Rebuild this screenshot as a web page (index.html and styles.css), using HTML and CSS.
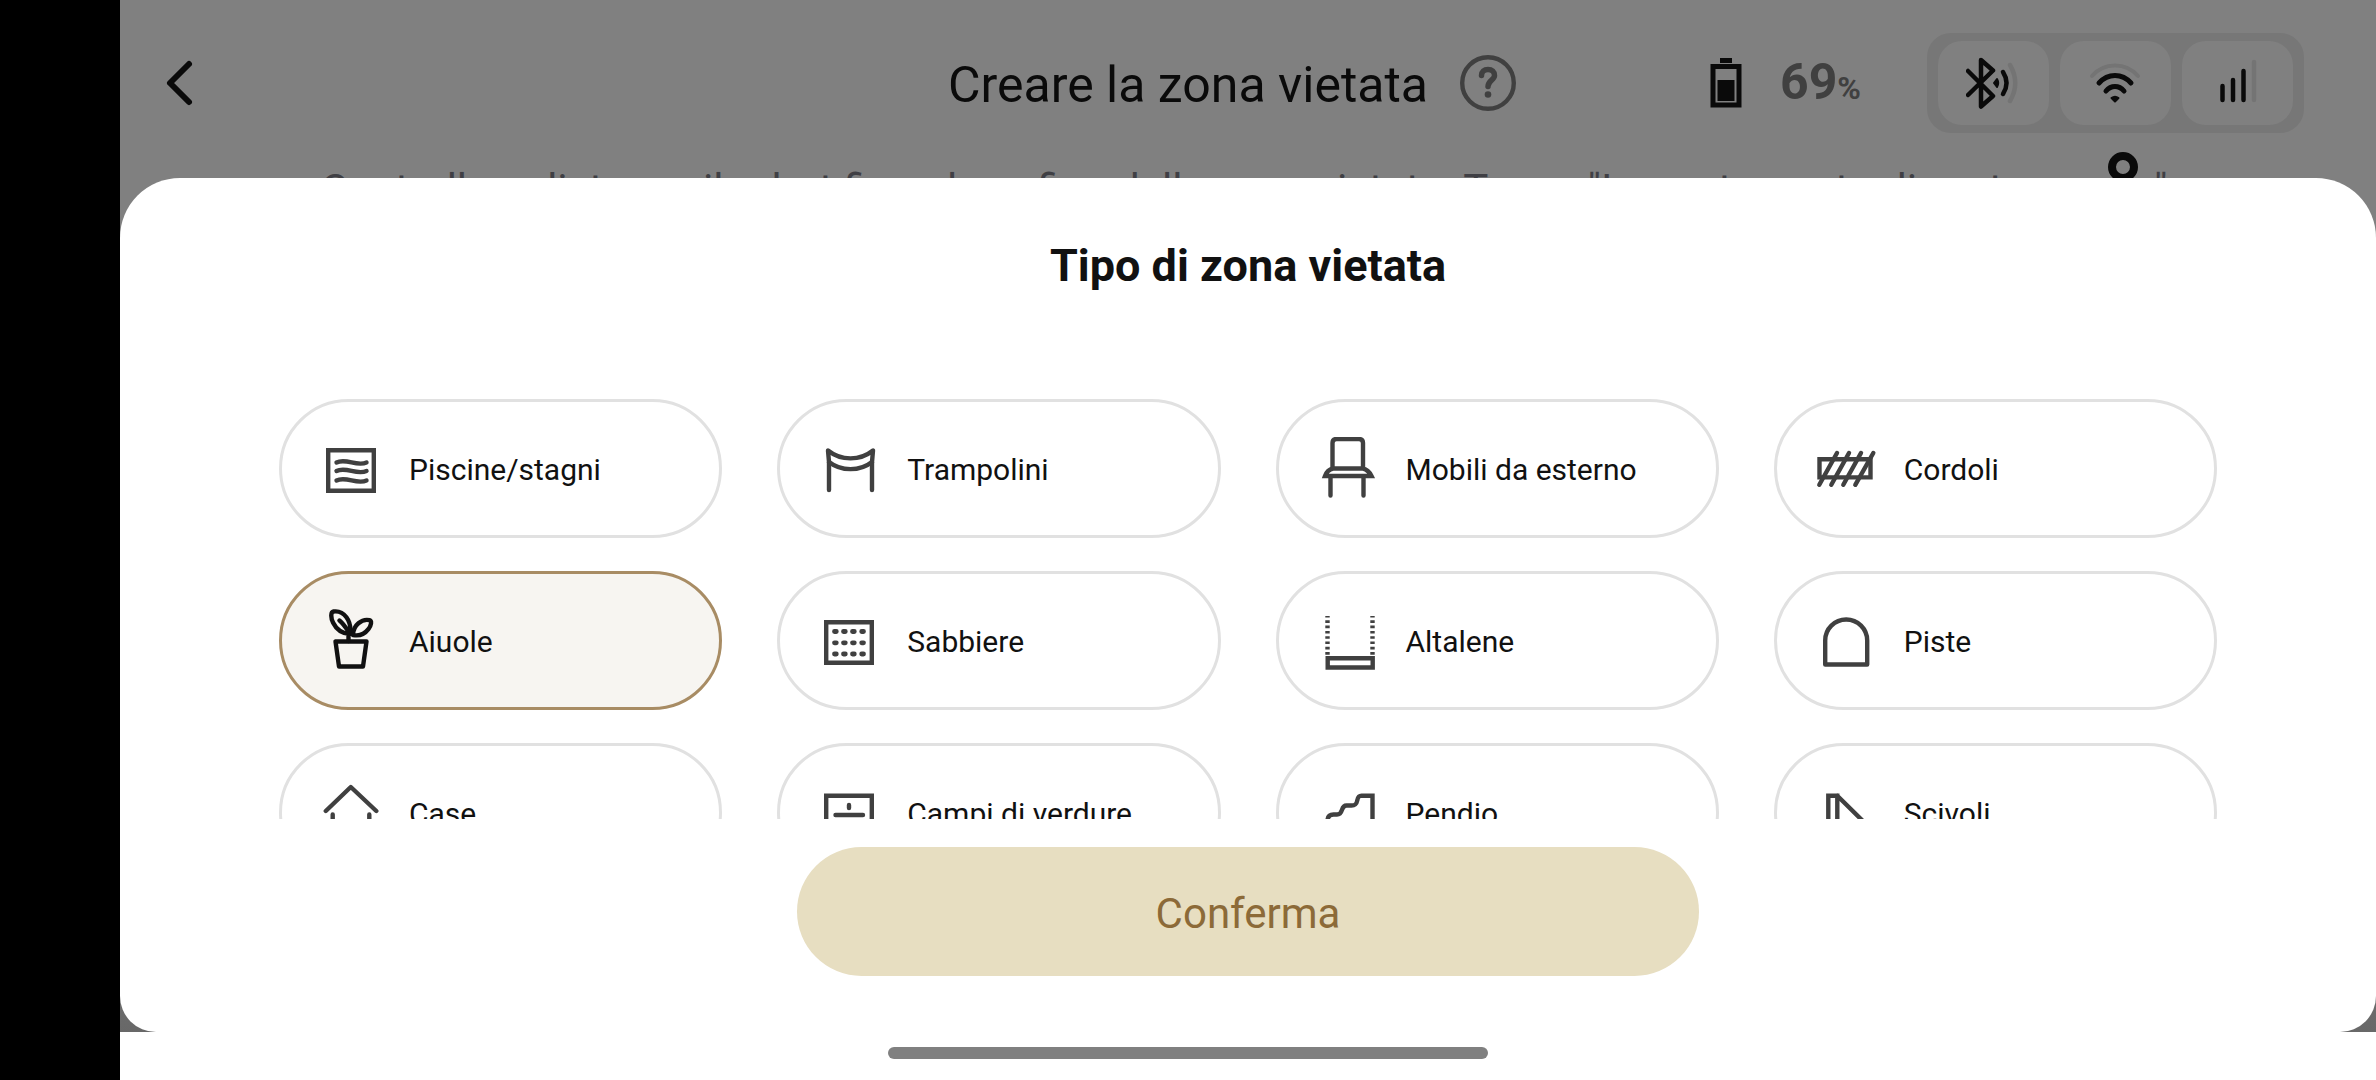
FILE: index.html
```html
<!DOCTYPE html>
<html lang="it">
<head>
<meta charset="utf-8">
<meta name="viewport" content="width=device-width, initial-scale=1">
<title>Creare la zona vietata</title>
<link rel="stylesheet" href="styles.css">
</head>
<body>
<div class="cutout"></div>
<div class="device">
  <div class="app">
    <div class="screen">
      <header class="topbar">
        <button class="icon-button back" type="button" aria-label="Indietro">
          <svg viewBox="0 0 60 60" width="60" height="60" fill="none" stroke="#0a0a0a" stroke-width="6" stroke-linecap="round" stroke-linejoin="round"><path d="M29 11 10 30l19 19"/></svg>
        </button>
        <div class="heading">
          <h1 class="page-title">Creare la zona vietata</h1>
          <button class="icon-button" type="button" aria-label="Aiuto">
            <svg viewBox="0 0 56 56" width="56" height="56" fill="none" stroke="#404040"><circle cx="28" cy="28" r="25.800" stroke-width="4.400"/><path d="M21.500 20.500c0-4 2.600-6 6.500-6s6.500 2.200 6.500 6c0 4.500-6.500 5-6.500 11" stroke-width="5.500" stroke-linecap="round"/><circle cx="28" cy="39.500" r="3.300" fill="#404040" stroke="none"/></svg>
          </button>
        </div>
        <div class="status">
          <svg class="battery" viewBox="0 0 32 50" width="32" height="50"><path d="M10 0h12v5H10z" fill="#0a0a0a"/><path d="M3 8.500h26v38.500H3z" fill="none" stroke="#0a0a0a" stroke-width="5"/><path d="M7.500 22h17v21h-17z" fill="#0a0a0a"/></svg>
          <p class="charge">69<span class="percent">%</span></p>
          <ul class="signals">
            <li class="signal">
              <svg viewBox="0 0 56 52" width="56" height="52" fill="none" stroke="#0a0a0a" stroke-width="4.500" stroke-linecap="round" stroke-linejoin="round"><path d="m2 14 25 25-12 10.500V3l12 10.500L2 38"/><path d="M37 15c4.500 7 4.500 15 0 22"/><path d="m28 26 3-4c1.500 2.500 1.500 5.500 0 8z" fill="#0a0a0a" stroke-width="2"/><path d="M44 8c7 12 7 24 0 36" stroke="#747474"/></svg>
            </li>
            <li class="signal">
              <svg viewBox="0 0 56 52" width="56" height="52" fill="none" stroke="#0a0a0a" stroke-width="5" stroke-linecap="round"><path d="M4 19C16 5 38 5 50 19" stroke="#747474" stroke-width="4"/><path d="M11 26c9-10 23-10 32 0"/><path d="M18 34c5-6 13-6 18 0"/><path d="M27 44.500 23.500 41c2-1.500 5-1.500 7 0z" fill="#0a0a0a" stroke-width="2" stroke-linejoin="round"/></svg>
            </li>
            <li class="signal">
              <svg viewBox="0 0 56 52" width="56" height="52" fill="none" stroke="#0a0a0a" stroke-width="4.500" stroke-linecap="round"><path d="M12.500 29v14M23 23v20M33.500 14v29"/><path d="M44 5v38" stroke="#747474"/></svg>
            </li>
          </ul>
        </div>
      </header>
      <p class="hint">
        <span>Controlla a distanza il robot fino al confine della zona vietata. Tocca "Imposta punto di partenza</span>
        <svg class="pin" viewBox="0 0 30 76" width="30" height="76" fill="none" stroke="#0a0a0a" stroke-width="8"><circle cx="15" cy="15" r="11"/><path d="M15 26v34"/></svg>
        <span>"</span>
      </p>
    </div>

    <form class="sheet">
      <h2 class="sheet-title" id="sheet-title">Tipo di zona vietata</h2>
      <div class="options" role="radiogroup" aria-labelledby="sheet-title">
        <label class="option"><input class="option-input" type="radio" name="zona">
          <svg class="option-icon" viewBox="0 0 64 64"><path d="M9.200 13.200h45.600v40.600H9.200z" stroke-linejoin="miter"/><path d="M17.500 25.500c9.500-5 20 4.500 30 0M17.500 34c9.500-5 20 4.500 30 0M17.500 43.500c9.500-5 20 4.500 30 0"/></svg>
          <span class="option-label">Piscine/stagni</span></label>
        <label class="option"><input class="option-input" type="radio" name="zona">
          <svg class="option-icon" viewBox="0 0 64 64"><path d="M12 53V25l-1-11.500c13 10.500 32 10.500 45 0L55 25v28"/><path d="M12 25c12 9.500 31 9.500 43 0"/></svg>
          <span class="option-label">Trampolini</span></label>
        <label class="option"><input class="option-input" type="radio" name="zona">
          <svg class="option-icon" viewBox="0 0 64 64"><path d="M16.500 30V6q0-4 4-4H43q4 0 4 4v24"/><path d="M9 39c1.500-4 4-6.500 8-7.500h30c4 1 6.500 3.500 8.500 7.500z" stroke-linejoin="miter"/><path d="M14.500 41v17.500M47.500 41v17.500"/></svg>
          <span class="option-label">Mobili da esterno</span></label>
        <label class="option"><input class="option-input" type="radio" name="zona">
          <svg class="option-icon" viewBox="0 0 64 64"><path d="M5.500 22.200h51v18.200h-51z" stroke-linejoin="miter"/><path d="M23 16 5.300 47.800M35 16 17.300 47.800M47 16 29.300 47.800M59.300 16 41.300 47.800"/></svg>
          <span class="option-label">Cordoli</span></label>

        <label class="option"><input class="option-input" type="radio" name="zona" checked>
          <svg class="option-icon" viewBox="0 0 64 64"><path d="M16.500 32.500h31l-3.500 25H20z"/><path d="M29.500 32v-5M31 25c2-13-6-24-16.500-22.500C9 3.500 13.500 24 31 25zM20.500 11.500c4 3 7 8 10.500 13.500"/><path d="M34 26c0-10 9-16.500 16.500-14.800C55.500 12.500 48 29 34 26z"/></svg>
          <span class="option-label">Aiuole</span></label>
        <label class="option"><input class="option-input" type="radio" name="zona">
          <svg class="option-icon" viewBox="0 0 64 64"><path d="M9.200 13.200h45.600v40.600H9.200z" stroke-linejoin="miter"/><path d="M17.500 22.500h1.800m7.200 0h1.800m7.200 0h1.800m7.400 0h1.800M17.500 33.800h1.800m7.200 0h1.800m7.200 0h1.800m7.400 0h1.800M17.500 45h1.800m7.200 0h1.800m7.200 0h1.800m7.400 0h1.800" stroke-width="4.800"/></svg>
          <span class="option-label">Sabbiere</span></label>
        <label class="option"><input class="option-input" type="radio" name="zona">
          <svg class="option-icon" viewBox="0 0 64 64"><path d="M11.500 7v40M56.500 7v40" stroke-dasharray="2.600 2.700" stroke-dashoffset="1" stroke-linecap="butt"/><path d="M11.700 49.200h45v9.300h-45z" stroke-linejoin="miter"/></svg>
          <span class="option-label">Altalene</span></label>
        <label class="option"><input class="option-input" type="radio" name="zona">
          <svg class="option-icon" viewBox="0 0 64 64"><path d="M11.200 55.500v-24a21 21 0 0 1 42 0v24z"/></svg>
          <span class="option-label">Piste</span></label>

        <label class="option"><input class="option-input" type="radio" name="zona">
          <svg class="option-icon" viewBox="0 0 64 64"><path d="m6.800 30 25-24 25.500 24M13.700 33.500V56h36.600V33.500"/></svg>
          <span class="option-label">Case</span></label>
        <label class="option"><input class="option-input" type="radio" name="zona">
          <svg class="option-icon" viewBox="0 0 64 64"><path d="M9.200 14.700h45.600v40.600H9.200z" stroke-linejoin="miter"/><path d="M32 24v3M18.500 34h27.500M32 42v3"/></svg>
          <span class="option-label">Campi di verdure</span></label>
        <label class="option"><input class="option-input" type="radio" name="zona">
          <svg class="option-icon" viewBox="0 0 64 64"><path d="M11.500 55V40c0-4.500 2-6.500 6-6.500h3.500c7 0 3-9 9.500-9h5c9 0 3-9.800 10-9.800h11V55z" stroke-linejoin="miter"/></svg>
          <span class="option-label">Pendio</span></label>
        <label class="option"><input class="option-input" type="radio" name="zona">
          <svg class="option-icon" viewBox="0 0 64 64"><path d="M14.300 55V14.700h9V55M23.300 14.700 58 49" stroke-linejoin="miter"/></svg>
          <span class="option-label">Scivoli</span></label>
      </div>
      <button class="confirm" type="button">Conferma</button>
    </form>
  </div>
  <div class="gesture-bar"><div class="gesture-handle"></div></div>
</div>
</body>
</html>
```
FILE: styles.css
```css
* {
  box-sizing: border-box;
}

body {
  margin: 0;
  height: 100vh;
  display: flex;
  background: #fff;
  color: #111;
  font-family: Roboto, "Liberation Sans", sans-serif;
}

h1,
h2,
p,
ul {
  margin: 0;
  padding: 0;
}

svg {
  display: block;
  flex: none;
}

.cutout {
  flex: none;
  width: 120px;
  background: #000;
}

.device {
  flex: 1;
  min-width: 0;
  display: flex;
  flex-direction: column;
}

.app {
  flex: 1;
  min-height: 0;
  display: flex;
  flex-direction: column;
  background: linear-gradient(#808080 80%, #686868);
}

/* Dimmed page behind the sheet */
.screen {
  flex: none;
  height: 178px;
}

.topbar {
  height: 166px;
  padding: 0 72px 0 40px;
  display: grid;
  grid-template-columns: 1fr auto 1fr;
  align-items: center;
}

.icon-button {
  padding: 0;
  border: 0;
  background: none;
}

.back {
  justify-self: start;
}

.heading {
  display: flex;
  align-items: center;
  gap: 32px;
}

.page-title {
  padding-top: 4px;
  font-size: 50px;
  line-height: 60px;
  font-weight: 400;
  color: #0a0a0a;
}

.status {
  justify-self: end;
  display: flex;
  align-items: center;
}

.battery {
  margin-right: 38px;
}

.charge {
  padding-top: 4px;
  margin-right: 66px;
  font-size: 50px;
  line-height: 64px;
  font-weight: 700;
  color: #404040;
}

.percent {
  font-size: 32px;
}

.signals {
  display: flex;
  gap: 11px;
  padding: 8px 11px;
  border-radius: 24px;
  background: #777;
  list-style: none;
}

.signal {
  width: 111px;
  height: 84px;
  display: grid;
  place-items: center;
  border-radius: 24px;
  background: #808080;
}

.hint {
  height: 48px;
  padding-right: 8px;
  display: flex;
  align-items: center;
  justify-content: center;
  gap: 16px;
  font-size: 42px;
  line-height: 48px;
  white-space: nowrap;
  color: #3f3f44;
}

/* Bottom sheet */
.sheet {
  position: relative;
  flex: 1;
  min-height: 0;
  display: flex;
  flex-direction: column;
  padding: 60px 0 56px;
  border-radius: 60px 60px 36px 36px;
  background: #fff;
}

.sheet-title {
  font-size: 45px;
  line-height: 56px;
  font-weight: 700;
  text-align: center;
}

.options {
  flex: 1;
  min-height: 0;
  margin-top: 105px;
  padding: 0 159px;
  display: grid;
  grid-template-columns: repeat(4, 1fr);
  grid-auto-rows: 139px;
  gap: 33px 55px;
  overflow-y: auto;
  scrollbar-width: none;
}

.option {
  position: relative;
  display: flex;
  align-items: center;
  gap: 26px;
  padding: 0 37px;
  border: 3px solid #e1e1e1;
  border-radius: 70px;
  font-size: 30px;
  line-height: 40px;
  white-space: nowrap;
}

.option:has(:checked) {
  border-color: #a88c64;
  background: #f7f5f1;
}

.option-input {
  position: absolute;
  inset: 0;
  margin: 0;
  opacity: 0;
}

.option-icon {
  width: 64px;
  height: 64px;
  fill: none;
  stroke: #404040;
  stroke-width: 4.4px;
  stroke-linecap: round;
  stroke-linejoin: round;
}

.option:has(:checked) .option-icon {
  stroke: #111;
}

.option-label {
  padding-top: 2px;
}

.confirm {
  align-self: center;
  width: 40%;
  height: 129px;
  margin-top: 28px;
  padding: 4px 0 0;
  border: 0;
  border-radius: 65px;
  background: #e7dec1;
  color: #8c6a38;
  font: 400 42px/56px Roboto, "Liberation Sans", sans-serif;
}

/* System gesture area, centred on the whole display */
.gesture-bar {
  flex: none;
  height: 48px;
  padding: 15px 120px 0 0;
}

.gesture-handle {
  width: 600px;
  height: 12px;
  margin: 0 auto;
  border-radius: 6px;
  background: #808080;
}
```
